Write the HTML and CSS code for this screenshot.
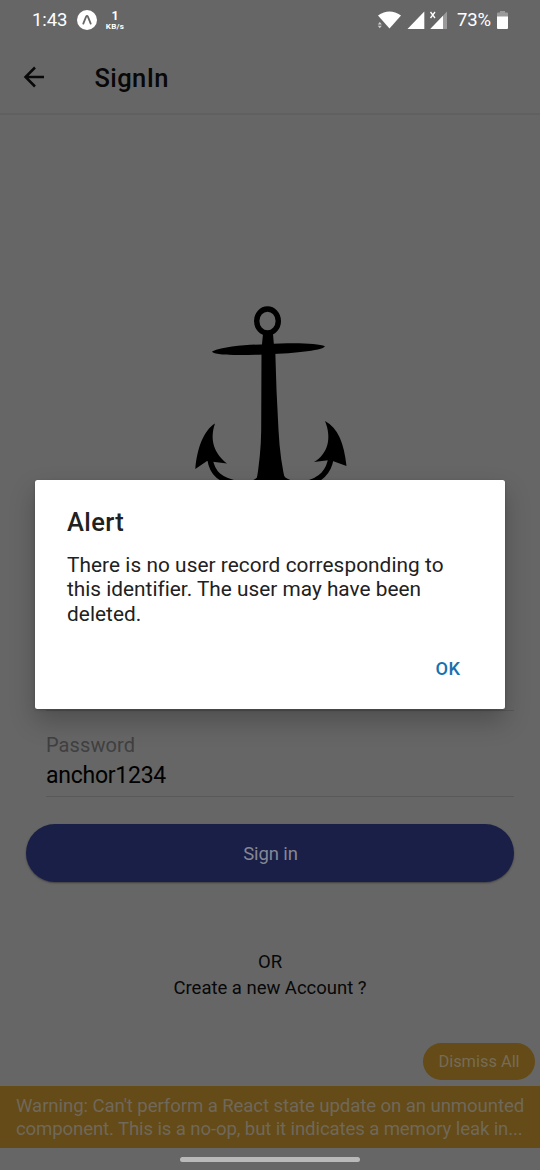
FILE: index.html
```html
<!DOCTYPE html>
<html lang="en">
<head>
<meta charset="utf-8">
<title>SignIn</title>
<link rel="stylesheet" href="styles.css">
</head>
<body>
<div class="screen">
  <div class="statusbar">
    <span class="clock">1:43</span>
    <svg class="expo" width="20" height="20" viewBox="0 0 20 20"><circle cx="10" cy="10" r="10" fill="#fff"/><path d="M6.3 13.6 9 6.8Q10 4.8 11 6.8L13.7 13.6" fill="none" stroke="#666" stroke-width="1.8" stroke-linecap="round"/></svg>
    <div class="speed"><b>1</b><span>KB/s</span></div>
    <svg class="signals" width="72" height="20" viewBox="0 0 72 20">
      <path d="M1 5.500Q12.500-2.500 24 5.500L12.500 18.500Z" fill="#fff"/>
      <path d="M.800 14.500h4l-2-2.500zM.800 15.800h4l-2 2.500z" fill="#ccc"/>
      <path d="M47.300 1.500V19H30.500Z" fill="#fff"/>
      <path d="M70 1.500V19H53.300Z" fill="#9a9a9a"/>
      <path d="M66 5.700V19H53.300Z" fill="#fff"/>
      <path d="M53.500 2l4.500 6M58 2l-4.500 6" stroke="#fff" stroke-width="1.300"/>
    </svg>
    <span class="percent">73%</span>
    <svg class="battery" width="11" height="18" viewBox="0 0 11 18"><path d="M3 0h5v1.500h2q1 0 1 1V6H0V2.500q0-1 1-1h2z" fill="#9a9a9a"/><path d="M0 5.500h11V17q0 1-1 1H1q-1 0-1-1z" fill="#fff"/></svg>
  </div>
  <header class="appbar">
    <svg width="22" height="22" viewBox="0 0 22 22"><path d="M21 11H3M12 1.500 2.500 11l9.500 9.500" fill="none" stroke="#080808" stroke-width="2.500"/></svg>
    <h1>SignIn</h1>
  </header>
  <main class="content">
    <svg class="anchor" width="180" height="200" viewBox="0 0 180 200">
      <ellipse cx="87.500" cy="31" rx="10.800" ry="12" fill="none" stroke="#000" stroke-width="5.400"/>
      <path d="M83 44h10l1 12-1 8H82V54Z"/>
      <path d="M32 61.500C45 56 70 54.500 87 54.300 110 52.500 138 53 145 56.200 143 61 108 63.500 84 64.500 58 65.500 34 65.500 32 61.500Z"/>
      <path d="M81.500 62H95.300L96.500 100 98.500 140Q100 170 106 194H76Q81 165 81.200 140Z"/>
      <path d="M35 133.500C24 140 17 158 15.300 179L27 171 47 173.500C35 164 29 151 35 133.500Z"/>
      <path d="M145 131C152 148 148 164 134 172L150 170 166.500 176C164 153 158 138 145 131Z"/>
      <path d="M30 169C32 183 40 191 60 194M151 168C149 181 142 190 125 194" fill="none" stroke="#000" stroke-width="5.500"/>
      <path d="M70 191Q76 190 78 186h26q2 3 10 5z"/>
    </svg>
    <div class="field email"></div>
    <div class="field password">
      <label>Password</label>
      <div class="value">anchor1234</div>
    </div>
    <div class="signin"><span>Sign in</span></div>
    <div class="links"><p class="or">OR</p><p class="create">Create a new Account ?</p></div>
  </main>
  <div class="dismiss"><span>Dismiss All</span></div>
  <div class="warning"><p class="w1">Warning: Can't perform a React state update on an unmounted</p><p class="w2">component. This is a no-op, but it indicates a memory leak in...</p></div>
  <div class="navbar"><i></i></div>
  <section class="alert">
    <h2>Alert</h2>
    <p class="a1">There is no user record corresponding to</p>
    <p class="a2">this identifier. The user may have been</p>
    <p class="a3">deleted.</p>
    <div class="actions"><span>OK</span></div>
  </section>
</div>
</body>
</html>
```
FILE: styles.css
```css
* { box-sizing: border-box; margin: 0; padding: 0; }
body { background: #666; font-family: Roboto, "Liberation Sans", sans-serif; color: #080808; }
svg { display: block; flex: none; }
p, span, h1, h2, label, .value { white-space: nowrap; }
.screen { position: relative; width: 540px; height: 1170px; overflow: hidden; display: flex; flex-direction: column; background: #666; }
.statusbar { height: 40px; display: flex; align-items: center; padding: 0 32px; color: #fff; }
.clock { width: 45px; font-size: 18.5px; letter-spacing: -.1px; }
.speed { margin-left: 7px; width: 22px; padding-top: 1px; display: flex; flex-direction: column; align-items: center; }
.speed b { font-size: 12.500px; line-height: 12px; }
.speed span { font-size: 8px; line-height: 9px; font-weight: 700; letter-spacing: .3px; }
.signals { margin-left: 251px; }
.percent { margin-left: 8px; width: 40px; font-size: 18.5px; letter-spacing: -.2px; }
.appbar { height: 75px; padding: 1px 23px 0; display: flex; align-items: center; gap: 49.500px; border-bottom: 2px solid #606060; }
.appbar h1 { font-size: 25.500px; font-weight: 500; line-height: 30px; letter-spacing: .4px; padding-top: 2px; }
.content { display: flex; flex-direction: column; height: 928px; }
.anchor { margin: 175px 0 0 180px; }
.field { margin-left: 46px; width: 468px; border-bottom: 1px solid #595959; }
.email { height: 221px; }
.password { height: 86px; padding-top: 21px; display: flex; flex-direction: column; }
.password label { font-size: 20px; line-height: 26px; color: #404040; letter-spacing: .1px; }
.password .value { font-size: 23px; line-height: 36px; color: #000; letter-spacing: -.25px; }
.signin { margin: 27px 26px 0; height: 58px; flex: none; border-radius: 29px; background: #191f47; color: #858794; display: flex; align-items: center; justify-content: center; font-size: 18.500px; letter-spacing: -.1px; box-shadow: 0 1px 2px rgba(0,0,0,.4); padding: 2px 0 0 1px; }
.links { margin-top: 67px; text-align: center; font-size: 18.500px; line-height: 26px; letter-spacing: -.02px; }
.dismiss { align-self: flex-end; margin-right: 5px; width: 112px; height: 37px; flex: none; border-radius: 19px; background: #644b18; color: #776b56; display: flex; align-items: center; justify-content: center; font-size: 16.400px; }
.warning { margin-top: 6px; height: 62px; flex: none; padding: 9px 16px; background: #644b18; color: #70685a; font-size: 18.600px; line-height: 23px; }
.w1 { letter-spacing: -.09px; }
.w2 { letter-spacing: -.12px; }
.navbar { height: 22px; flex: none; display: flex; justify-content: center; padding-top: 9px; }
.navbar i { width: 180px; height: 5px; border-radius: 3px; background: #b9b9b9; }
.alert { position: absolute; left: 35px; top: 480px; width: 470px; height: 229px; border-radius: 2.500px; background: #fff; padding: 27px 32px; color: #212121; box-shadow: 0 12px 26px rgba(0,0,0,.24), 0 1px 3px rgba(0,0,0,.2); }
.alert h2 { font-size: 25.500px; line-height: 31px; font-weight: 500; letter-spacing: .4px; margin-bottom: 14.500px; }
.alert p { font-size: 20.800px; line-height: 24.500px; letter-spacing: .06px; }
.alert .a2 { letter-spacing: .01px; }
.actions { display: flex; justify-content: flex-end; margin-top: 31px; padding-right: 12.500px; color: #1b6fae; font-size: 18.200px; line-height: 24px; font-weight: 500; letter-spacing: .5px; }
```
